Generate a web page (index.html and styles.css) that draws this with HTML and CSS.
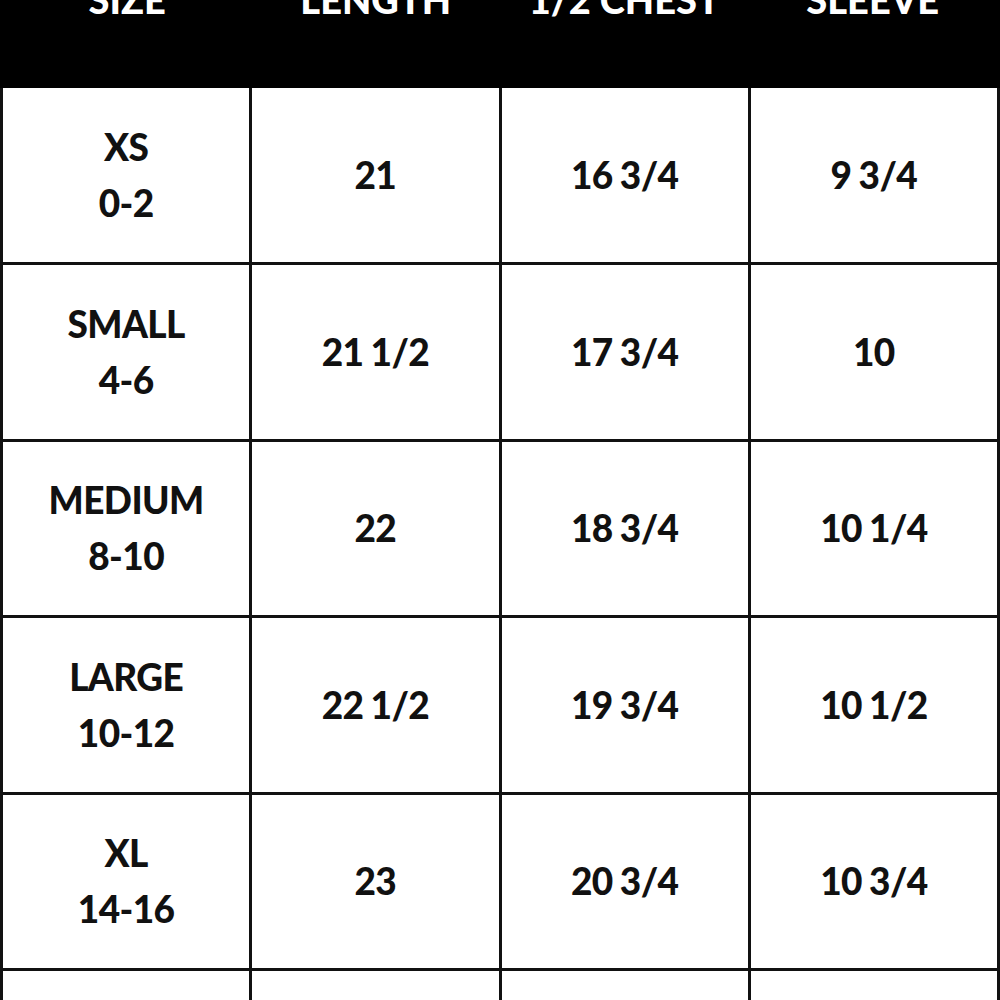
FILE: index.html
```html
<!DOCTYPE html>
<html>
<head>
<meta charset="utf-8">
<link rel="stylesheet" href="styles.css">
</head>
<body>
<div class="chart">
  <div class="head">
    <div class="hcell">SIZE</div>
    <div class="hcell">LENGTH</div>
    <div class="hcell">1/2 CHEST</div>
    <div class="hcell">SLEEVE</div>
  </div>
  <div class="grid">
    <div class="cell"><span>XS</span><span>0-2</span></div>
    <div class="cell"><span>21</span></div>
    <div class="cell"><span>16 3/4</span></div>
    <div class="cell"><span>9 3/4</span></div>

    <div class="cell"><span>SMALL</span><span>4-6</span></div>
    <div class="cell"><span>21 1/2</span></div>
    <div class="cell"><span>17 3/4</span></div>
    <div class="cell"><span>10</span></div>

    <div class="cell"><span>MEDIUM</span><span>8-10</span></div>
    <div class="cell"><span>22</span></div>
    <div class="cell"><span>18 3/4</span></div>
    <div class="cell"><span>10 1/4</span></div>

    <div class="cell"><span>LARGE</span><span>10-12</span></div>
    <div class="cell"><span>22 1/2</span></div>
    <div class="cell"><span>19 3/4</span></div>
    <div class="cell"><span>10 1/2</span></div>

    <div class="cell"><span>XL</span><span>14-16</span></div>
    <div class="cell"><span>23</span></div>
    <div class="cell"><span>20 3/4</span></div>
    <div class="cell"><span>10 3/4</span></div>

    <div class="cell"><span>XXL</span><span>18-20</span></div>
    <div class="cell"><span>23 1/2</span></div>
    <div class="cell"><span>21 3/4</span></div>
    <div class="cell"><span>11</span></div>
  </div>
</div>
</body>
</html>
```

FILE: styles.css
```css
html, body {
  margin: 0;
  padding: 0;
  background: #fff;
  overflow: hidden;
  height: 1000px;
}
.chart {
  width: 1000px;
  font-family: "Lato", "Liberation Sans", sans-serif;
  font-weight: 900;
  color: #111;
}
.head {
  background: #000;
  height: 88px;
  display: grid;
  grid-template-columns: repeat(4, 1fr);
  padding: 0 3px;
  overflow: hidden;
}
.hcell {
  color: #fff;
  font-size: 38px;
  line-height: 1;
  text-align: center;
  margin-top: -20px;
}
.grid {
  display: grid;
  grid-template-columns: repeat(4, 1fr);
  grid-template-rows: 174px;
  grid-auto-rows: 173.5px;
  gap: 3px;
  padding: 0 3px;
  background: #111;
}
.cell {
  background: #fff;
  display: flex;
  flex-direction: column;
  align-items: center;
  justify-content: center;
  font-size: 37px;
  line-height: 56px;
  letter-spacing: -0.6px;
  word-spacing: -1px;
}
```
